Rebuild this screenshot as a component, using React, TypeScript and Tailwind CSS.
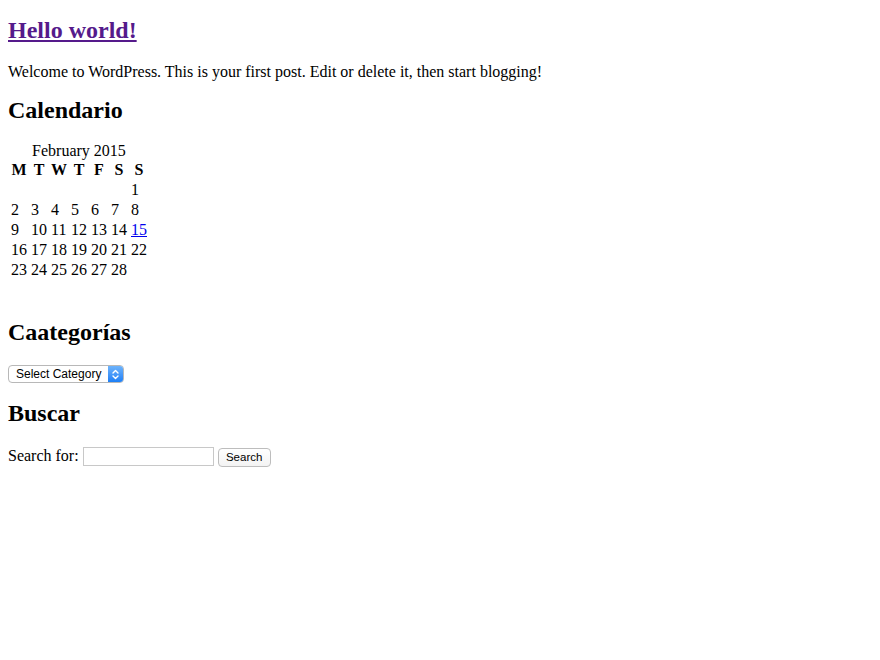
import React from "react";

const weeks: (number | null)[][] = [
  [null, null, null, null, null, null, 1],
  [2, 3, 4, 5, 6, 7, 8],
  [9, 10, 11, 12, 13, 14, 15],
  [16, 17, 18, 19, 20, 21, 22],
  [23, 24, 25, 26, 27, 28, null],
];

export default function App() {
  return (
    <div className="px-2 font-['Liberation_Serif',serif] text-black text-[16px] bg-white min-h-[660px]">
      <h2 className="pt-[16px] text-[24px] leading-[28px] font-bold">
        <a href="#" className="text-[#551a8b] underline">
          Hello world!
        </a>
      </h2>
      <p className="mt-[19px] leading-[18px]">
        Welcome to WordPress. This is your first post. Edit or delete it, then start blogging!
      </p>
      <h2 className="mt-[15px] text-[24px] leading-[28px] font-bold">Calendario</h2>
      <table className="mt-[19px] border-separate border-spacing-[2px]">
        <caption className="leading-[16px] text-center">February 2015</caption>
        <thead>
          <tr>
            {["M", "T", "W", "T", "F", "S", "S"].map((d, i) => (
              <th key={i} className="p-[1px] leading-[16px] font-bold text-center">
                {d}
              </th>
            ))}
          </tr>
        </thead>
        <tbody>
          {weeks.map((w, i) => (
            <tr key={i}>
              {w.map((d, j) => (
                <td key={j} className="p-[1px] leading-[16px] text-left h-[18px]">
                  {d === 15 ? (
                    <a href="#" className="text-[#0000ee] underline">
                      15
                    </a>
                  ) : (
                    d ?? ""
                  )}
                </td>
              ))}
            </tr>
          ))}
        </tbody>
      </table>
      <h2 className="mt-[37px] text-[24px] leading-[28px] font-bold">Caategorías</h2>
      <div className="mt-[19px] flex h-[18px] w-[116px] rounded-[4px] border border-[#b8b8b8] bg-white overflow-hidden font-['Liberation_Sans',sans-serif] text-[12px]">
        <div className="flex-1 pl-[7px] leading-[16px]">Select Category</div>
        <div className="w-[15px] flex items-center justify-center bg-gradient-to-b from-[#6db3fb] to-[#1b7ff6]">
          <svg width="7" height="11" viewBox="0 0 7 11" fill="none" stroke="white" strokeWidth="1.4" strokeLinecap="round" strokeLinejoin="round">
            <path d="M1 4 L3.5 1.5 L6 4" />
            <path d="M1 7 L3.5 9.5 L6 7" />
          </svg>
        </div>
      </div>
      <h2 className="mt-[16px] text-[24px] leading-[28px] font-bold">Buscar</h2>
      <form className="mt-[20px] flex items-start" onSubmit={(e) => e.preventDefault()}>
        <label className="leading-[18px]">Search for:</label>
        <input
          type="text"
          className="ml-[4px] h-[19px] w-[131px] border border-[#c8c8c8] bg-white outline-none"
        />
        <button
          type="submit"
          className="ml-[4px] mt-[1px] h-[19px] w-[53px] rounded-[4px] border border-[#bdbdbd] bg-gradient-to-b from-white to-[#f3f3f3] font-['Liberation_Sans',sans-serif] text-[11.5px] leading-[17px] text-black"
        >
          Search
        </button>
      </form>
    </div>
  );
}
